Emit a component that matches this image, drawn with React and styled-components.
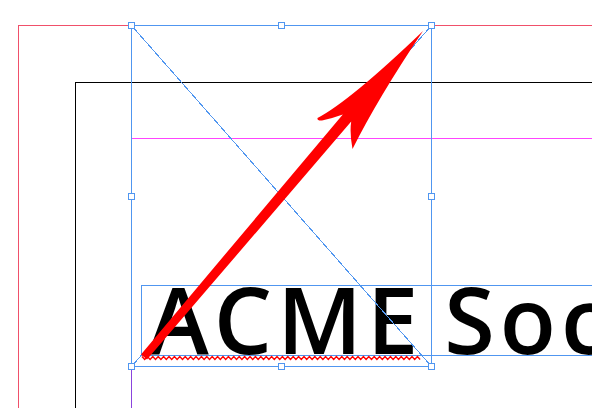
import React from 'react';
import styled, { createGlobalStyle } from 'styled-components';

const GlobalStyle = createGlobalStyle`
  html, body {
    margin: 0;
    padding: 0;
    background: #ffffff;
  }
`;

const colors = {
  bleed: '#f0506a',
  page: '#000000',
  margin: '#ff44ff',
  column: '#8a44dd',
  frame: '#5096f0',
  mark: '#ff0000',
};

const Canvas = styled.div`
  position: relative;
  width: 592px;
  height: 408px;
  overflow: hidden;
  background: #ffffff;
`;

// nested guides: bleed -> page edge -> margins, each one inset by padding
const BleedGuide = styled.div`
  height: 100%;
  box-sizing: border-box;
  margin-left: 18px;
  padding: 56px 0 0 56px;
  border-top: 1px solid ${colors.bleed};
  border-left: 1px solid ${colors.bleed};
  position: relative;
  top: 25px;
`;

const PageEdge = styled.div`
  height: 100%;
  box-sizing: border-box;
  padding: 55px 0 0 55px;
  border-top: 1px solid ${colors.page};
  border-left: 1px solid ${colors.page};
`;

const MarginGuide = styled.div`
  height: 100%;
  border-top: 1px solid ${colors.margin};
  border-left: 1px solid ${colors.column};
`;

const TextFrame = styled.div`
  position: absolute;
  left: 141px;
  top: 285px;
  width: 520px;
  height: 71px;
  box-sizing: border-box;
  border: 1px solid ${colors.frame};
  padding-left: 6px;
`;

const Headline = styled.div`
  font-family: 'Open Sans', 'DejaVu Sans', sans-serif;
  font-weight: 600;
  font-size: 92px;
  line-height: 65px;
  letter-spacing: 5px;
  word-spacing: -8px;
  color: #000;
  white-space: nowrap;
`;

const SpellMark = styled.svg`
  position: absolute;
  left: 0;
  top: 69px;
  overflow: visible;
`;

const SelectedFrame = styled.div`
  position: absolute;
  left: 131px;
  top: 25px;
  width: 301px;
  height: 342px;
  box-sizing: border-box;
  border: 1px solid ${colors.frame};
`;

const Diagonals = styled.svg`
  position: absolute;
  left: -1px;
  top: -1px;
  overflow: visible;
`;

const Handle = styled.span`
  position: absolute;
  left: calc(${(p) => p.$x} * (100% + 1px) - 4px);
  top: calc(${(p) => p.$y} * (100% + 1px) - 4px);
  width: 7px;
  height: 7px;
  box-sizing: border-box;
  border: 1px solid ${colors.frame};
  background: #ffffff;
`;

const ArrowLayer = styled.svg`
  position: absolute;
  left: 0;
  top: 0;
`;

const handles = [
  [0, 0], [0.5, 0], [1, 0],
  [0, 0.5], [1, 0.5],
  [0, 1], [0.5, 1], [1, 1],
];

function zigzag(width, period, low, high) {
  const pts = [];
  for (let i = 0; i * period / 2 <= width; i++) {
    pts.push(`${(i * period) / 2},${i % 2 ? high : low}`);
  }
  return pts.join(' ');
}

export default function App() {
  return (
    <>
      <GlobalStyle />
      <Canvas>
        <BleedGuide>
          <PageEdge>
            <MarginGuide />
          </PageEdge>
        </BleedGuide>

        <TextFrame>
          <Headline>ACME Society</Headline>
          <SpellMark width="282" height="6">
            <polyline
              points={zigzag(280, 5.4, 1.5, 4.5)}
              fill="none"
              stroke={colors.mark}
              strokeWidth="1.4"
            />
          </SpellMark>
        </TextFrame>

        <SelectedFrame>
          <Diagonals width="301" height="342" shapeRendering="crispEdges">
            <line x1="0.5" y1="0.5" x2="300.5" y2="341.5" stroke={colors.frame} strokeWidth="1" />
            <line x1="300.5" y1="0.5" x2="0.5" y2="341.5" stroke={colors.frame} strokeWidth="1" />
          </Diagonals>
          {handles.map(([x, y]) => (
            <Handle key={`${x}-${y}`} $x={x} $y={y} />
          ))}
        </SelectedFrame>

        <ArrowLayer width="592" height="408" viewBox="0 0 592 408">
          <path
            fill={colors.mark}
            d="M 423 31
               Q 350 101 317.5 118
               Q 317 121 322 120.5
               Q 333 118 342.8 114.4
               L 141 354.4
               L 147 359.6
               L 351.2 121.6
               Q 349.5 133 352.5 149
               Q 378 98 423 31 Z"
          />
        </ArrowLayer>
      </Canvas>
    </>
  );
}
